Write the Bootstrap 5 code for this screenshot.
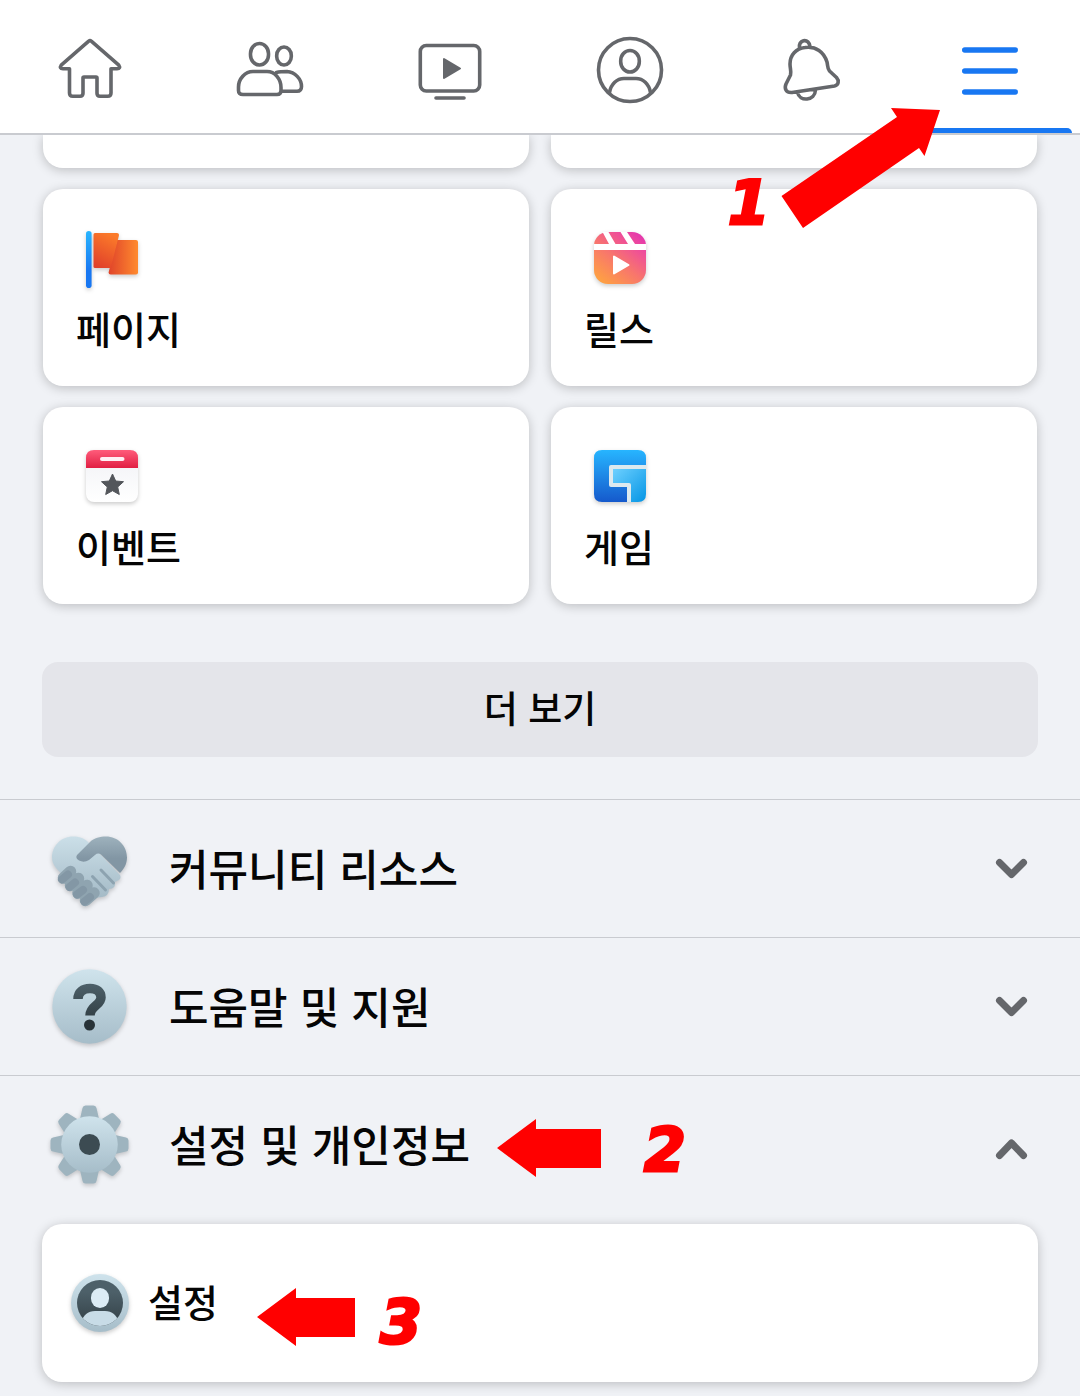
<!DOCTYPE html>
<html lang="ko">
<head>
<meta charset="utf-8">
<meta name="viewport" content="width=device-width, initial-scale=1">
<title>메뉴</title>
<link href="https://cdn.jsdelivr.net/npm/bootstrap@5.3.0/dist/css/bootstrap.min.css" rel="stylesheet">
<style>
body{background:#f0f2f6;color:#050505;font-family:"Noto Sans CJK KR",sans-serif;font-weight:500;overflow-x:hidden}
.top-tabs{border-bottom:2px solid #c9cbd0}
.tab-link{padding:30px 0 23px;position:relative;color:#65676b}
.tab-link svg{width:80px;height:80px;display:block}
.tab-link.active{color:#1877f2}
.tab-link.active::after{content:"";position:absolute;left:8px;right:8px;bottom:0;height:5px;background:#1877f2;border-radius:5px 5px 0 0}
.line-art{fill:none;stroke:currentColor;stroke-width:3.6;stroke-linecap:round;stroke-linejoin:round}
.page-pad{padding-left:42px;padding-right:42px}
.tile-grid{display:grid;grid-template-columns:1fr 1fr;column-gap:22px;row-gap:21px;padding:0 1px}
.tile{background:#fff;border-radius:20px;box-shadow:0 2px 11px rgba(0,0,0,.22);color:#050505;text-decoration:none;font-size:38px;line-height:48px}
.tile-link{padding:33px 33px 34px;display:flex;flex-direction:column;gap:10px}
.tile-link svg,.tile-row svg{width:72px;height:72px;overflow:visible}
.tile-stub{height:33px;border-radius:0 0 20px 20px}
.soft{filter:drop-shadow(0 2px 2px rgba(0,0,0,.2))}
.more-btn{background:#e4e5ea;border:0;border-radius:16px;font-size:37px;line-height:48px;font-weight:500;color:#050505;padding:21px 0 26px;margin-top:58px;margin-bottom:42px}
.section-btn{border:0;border-top:1px solid #c9cbd0;background:none;height:138px;font-size:43px;line-height:60px;font-weight:500;color:#050505;gap:31px;text-align:left}
.section-btn span{padding-bottom:4px}
.section-btn .sec-icon{width:96px;height:96px;flex:none}
.section-btn .chev{width:54px;height:54px;margin-left:auto;fill:none;stroke:#65676b;stroke-width:7;stroke-linecap:round;stroke-linejoin:round}
.tile-row{height:158px;padding:0 22px;gap:12px;margin-top:11px;margin-bottom:14px;display:flex;align-items:center}
.tile-row span{padding-bottom:4px}
.guide{position:absolute;pointer-events:none;fill:red;z-index:5}
.guide-num{position:absolute;pointer-events:none;color:red;font:italic 900 60px/62px "DejaVu Sans",sans-serif;-webkit-text-stroke:3px red;z-index:5}
.guide-1{left:780px;top:106px;width:162px;height:124px}
.guide-num-1{left:728px;top:172px}
.guide-2{left:497px;top:43px;width:105px;height:60px}
.guide-num-2{left:644px;top:44px}
.guide-3{left:215px;top:63px;width:99px;height:60px}
.guide-num-3{left:338px;top:67px}
</style>
</head>
<body>
<header class="top-tabs bg-white position-relative">
<nav class="row g-0" aria-label="탭">
<a class="col tab-link d-flex justify-content-center" href="#" aria-label="홈"><svg class="line-art" viewBox="0 0 80 80"><path d="M38.7 11.2 11.2 35.2Q9 38.5 13 38.7H19.5V63q0 3.3 3.3 3.3H30q3 0 3-3V48q0-1 1-1H46q1 0 1 1V63.300q0 3 3 3H57.700q3.300 0 3.300-3.300V38.700H67q4-.2 1.800-3.500L41.300 11.200Q40 10 38.700 11.200Z"/></svg></a>
<a class="col tab-link d-flex justify-content-center" href="#" aria-label="친구"><svg class="line-art" viewBox="0 0 80 80"><rect x="20.500" y="13.500" width="18" height="21.500" rx="9" ry="10"/><rect x="46.700" y="17" width="14.600" height="18" rx="7.300" ry="8.500"/><path d="M23 41.500H37C45 41.500 51 49 51 57.500V60.500Q51 64.500 47 64.500H13Q8.500 64.500 8.500 60.500V57C8.500 49 15 41.500 23 41.500ZM46.500 42.500C50 41.500 52 41.500 57 41.500 65 42 71.500 49 71.500 56.500Q71.500 61.300 67 61.300H52"/></svg></a>
<a class="col tab-link d-flex justify-content-center" href="#" aria-label="Watch"><svg class="line-art" viewBox="0 0 80 80"><rect x="10.300" y="15.500" width="59.400" height="45.500" rx="6"/><path d="M26 68H54"/><path fill="currentColor" stroke-width="2" d="M34 29V48L50 38.500Z"/></svg></a>
<a class="col tab-link d-flex justify-content-center" href="#" aria-label="프로필"><svg class="line-art" viewBox="0 0 80 80"><circle cx="40" cy="40" r="31.500"/><rect x="30.700" y="20.500" width="18.600" height="21.500" rx="9.300" ry="10.300"/><path d="M19.500 62.500C21 54 27 48.500 34 48.500H46C53 48.500 59 54 60.500 62.500"/></svg></a>
<a class="col tab-link d-flex justify-content-center" href="#" aria-label="알림"><svg class="line-art" viewBox="0 0 80 80"><path d="M20.500 45C21.500 41 20 39 20 34 20 25 26 18.500 35 17.500 46 16 54 22 57 32 58 36 57 37.500 59.500 41L66.500 47.500C69.500 51 68.500 55 64.500 56L22 62.500C16 63 14 58.500 16 54ZM29.500 18C29 14 30.500 11.500 33.500 10.700 37 10 39.500 12.500 40 16.500M27.500 62.500C29.500 72 45 71 45.500 60"/></svg></a>
<a class="col tab-link active d-flex justify-content-center" href="#" aria-label="메뉴" aria-current="page"><svg class="line-art" viewBox="0 0 80 80"><path stroke-width="5.600" d="M14.800 20H65.200M14.800 41H65.200M14.800 62H65.200"/></svg></a>
</nav>
<svg class="guide guide-1" viewBox="0 0 162 124"><path d="M160 4 111 2 117 11 1.500 90 23 122 139 42 144.500 50Z"/></svg>
<span class="guide-num guide-num-1">1</span>
</header>

<main>
<section class="page-pad">
<div class="tile-grid">
<div class="tile tile-stub"></div><div class="tile tile-stub"></div>
<a class="tile tile-link" href="#"><svg viewBox="0 0 72 72"><defs><linearGradient id="pole" x2="0" y2="1"><stop stop-color="#29b6ff"/><stop offset=".7" stop-color="#1877f2"/></linearGradient><linearGradient id="fa" x1=".6" x2=".2" y2="1"><stop stop-color="#fb7a2a"/><stop offset="1" stop-color="#e0402a"/></linearGradient><linearGradient id="fb"><stop stop-color="#e0442a"/><stop offset="1" stop-color="#ff8a2e"/></linearGradient></defs><g class="soft"><rect x="10" y="9" width="5.600" height="57" rx="2.800" fill="url(#pole)"/><path fill="url(#fb)" d="M41 18H60Q62 18 62 20V50.500Q62 52.500 60 52.500H34.500Q32.300 52.500 32.700 50Z"/><path fill="url(#fa)" d="M19 11H41Q43.500 11 42.800 14L34.700 46H19Q17.500 46 17.500 44.500V12.500Q17.500 11 19 11Z"/></g></svg><span>페이지</span></a>
<a class="tile tile-link" href="#"><svg viewBox="0 0 72 72"><defs><linearGradient id="rl" x1=".1" y1="1" x2=".9" y2="0"><stop stop-color="#ffa53e"/><stop offset=".45" stop-color="#f8766c"/><stop offset=".8" stop-color="#ee4b9c"/><stop offset="1" stop-color="#e233b0"/></linearGradient></defs><g class="soft"><rect x="10" y="10" width="52" height="52" rx="14" fill="url(#rl)"/><path fill="#fff" d="M10 22H25L18.500 10H24.500L31.500 22H44L36.500 10H43L51 22H62V28H10Z"/><path fill="#fff" stroke="#fff" stroke-width="2" stroke-linejoin="round" d="M30 34.500V51.500L44.500 43Z"/></g></svg><span>릴스</span></a>
<a class="tile tile-link" href="#"><svg viewBox="0 0 72 72"><defs><linearGradient id="ev" x2="0" y2="1"><stop stop-color="#ff5c7b"/><stop offset="1" stop-color="#e11f43"/></linearGradient><linearGradient id="ew" x2="0" y2="1"><stop stop-color="#f0f1f5"/><stop offset="1" stop-color="#fff"/></linearGradient></defs><g class="soft"><rect x="10" y="10" width="52" height="52" rx="8" fill="url(#ew)"/><path fill="url(#ev)" d="M10 28V18Q10 10 18 10H54Q62 10 62 18V28Z"/><rect x="24" y="17" width="24.500" height="4" rx="2" fill="#fff0f4"/></g><path fill="#53565b" stroke="#53565b" stroke-linejoin="round" d="M36.500 34 39.700 41 47.500 41.700 41.700 47 43.300 54.500 36.500 50.700 29.700 54.500 31.300 47 25.500 41.700 33.300 41Z"/></svg><span>이벤트</span></a>
<a class="tile tile-link" href="#"><svg viewBox="0 0 72 72"><defs><linearGradient id="ga" x2="0" y2="1"><stop stop-color="#27b5ff"/><stop offset="1" stop-color="#1559cc"/></linearGradient><linearGradient id="gb" x2="1" y2="1"><stop stop-color="#6dd0ff"/><stop offset="1" stop-color="#0495e5"/></linearGradient></defs><g class="soft"><path fill="#dce9ef" d="M25 25H62V54L54 62H43V47H25Z"/><path fill="url(#ga)" d="M18 10H54Q62 10 62 18V25H27Q25 25 25 27V45Q25 47 27 47H43V62H18Q10 62 10 54V18Q10 10 18 10Z"/><path fill="url(#gb)" d="M29 29H62V54Q62 62 54 62H47V45Q47 43 45 43H29Z"/></g></svg><span>게임</span></a>
</div>
<button type="button" class="more-btn d-block w-100">더 보기</button>
</section>

<section>
<button type="button" class="section-btn page-pad w-100 d-flex align-items-center" aria-expanded="false">
<svg class="sec-icon soft" viewBox="0 0 96 96"><defs><linearGradient id="hl" x2="0" y2="1"><stop stop-color="#cbdfe8"/><stop offset="1" stop-color="#a4bac6"/></linearGradient><linearGradient id="hd" x2="0" y2="1"><stop stop-color="#9eb2bd"/><stop offset=".6" stop-color="#8296a4"/></linearGradient></defs>
<path fill="url(#hl)" d="M31 15.500C37 15.500 42 17 46 21L58 33 78 54Q80 58 75 60L73 61Q74 68 67 68 67 75 60 76L43 78 22 55C14 48 10 43 10 36.500 10 25 19 15.500 31 15.500Z"/>
<path fill="url(#hd)" d="M64 15.500C76 15.500 85 25 85 36.500 85 43 82 48 78 52L59 33.500Q56 31.500 53 34L47 39Q42 42 37 39.500 33 37 35 34L48 21C52 17 58 15.500 64 15.500Z"/>
<path d="M21.500 57 28.500 50.500M28.500 64.500 36.500 57.500M36 72 45 64.500M43.500 79.500 52 72" stroke="#8fa4b0" stroke-width="11.500" stroke-linecap="round"/>
<path d="M20 58.500 26 53.500M27.500 66 33 61.500M35 73.500 41 69M42.500 80.500 48 76" stroke="#8397a5" stroke-width="8" stroke-linecap="round"/>
<path d="M50.500 55.500 63.500 69M59 49 71.500 62" stroke="#8da3b0" stroke-width="3" stroke-linecap="round"/></svg>
<span>커뮤니티 리소스</span><svg class="chev" viewBox="0 0 54 54"><path d="M15.500 20.500 27.500 32.500 39.500 20.500"/></svg></button>

<button type="button" class="section-btn page-pad w-100 d-flex align-items-center" aria-expanded="false">
<svg class="sec-icon" viewBox="0 0 96 96"><defs><linearGradient id="qc" x2="0" y2="1"><stop stop-color="#cfe3ec"/><stop offset="1" stop-color="#a6bdc9"/></linearGradient><linearGradient id="qd" gradientUnits="userSpaceOnUse" x1="0" y1="25" x2="0" y2="72"><stop stop-color="#4d6069"/><stop offset="1" stop-color="#283338"/></linearGradient></defs><circle class="soft" cx="47.500" cy="47.500" r="37.200" fill="url(#qc)"/><path d="M36 40C36 33 41 29.500 48 29.500 55 29.500 59 33 59 38.500 59 46.500 48 46.500 48 56.500" fill="none" stroke="url(#qd)" stroke-width="9.500"/><circle cx="47.500" cy="66" r="5.500" fill="#283338"/></svg>
<span>도움말 및 지원</span><svg class="chev" viewBox="0 0 54 54"><path d="M15.500 20.500 27.500 32.500 39.500 20.500"/></svg></button>

<div class="position-relative">
<button type="button" class="section-btn page-pad w-100 d-flex align-items-center" aria-expanded="true" aria-controls="privacy">
<svg class="sec-icon" viewBox="0 0 96 96"><defs><path id="tooth" d="M37.500 24 40.500 11Q41 8.500 43.500 8.500H51.500Q54 8.500 54.500 11L57.500 24Z"/></defs><g class="soft"><g fill="#9eb4bf"><use href="#tooth"/><use href="#tooth" transform="rotate(45 47.500 47.500)"/><use href="#tooth" transform="rotate(90 47.500 47.500)"/><use href="#tooth" transform="rotate(135 47.500 47.500)"/><use href="#tooth" transform="rotate(180 47.500 47.500)"/><use href="#tooth" transform="rotate(225 47.500 47.500)"/><use href="#tooth" transform="rotate(270 47.500 47.500)"/><use href="#tooth" transform="rotate(315 47.500 47.500)"/></g><circle cx="47.500" cy="47.500" r="28.300" fill="url(#qc)"/></g><circle cx="47.500" cy="47.500" r="10.500" fill="#3c4b52"/></svg>
<span>설정 및 개인정보</span><svg class="chev" viewBox="0 0 54 54"><path d="M15.500 37.500 27.500 25 39.500 37.500"/></svg></button>
<svg class="guide guide-2" viewBox="0 0 105 60"><path d="M0 30 39 1V11H104V50H39V59Z"/></svg>
<span class="guide-num guide-num-2">2</span>
</div>
<div id="privacy" class="page-pad">
<div class="position-relative">
<a class="tile tile-row" href="#"><svg class="soft" viewBox="0 0 72 72"><defs><clipPath id="av"><circle cx="36" cy="36" r="23"/></clipPath></defs><circle cx="36" cy="36" r="29" fill="url(#qc)"/><circle cx="36" cy="36" r="23" fill="url(#qd)"/><g clip-path="url(#av)"><rect x="27" y="21" width="18" height="20" rx="9" ry="9.500" fill="#dcecf5"/><path fill="#c8dce7" d="M17 56C19 48 24 44 31 44H41C48 44 53 48 55 56L50 62H22Z"/></g></svg><span>설정</span></a>
<svg class="guide guide-3" viewBox="0 0 99 60"><path d="M0 30 39 1V11H98V50H39V59Z"/></svg>
<span class="guide-num guide-num-3">3</span>
</div>
</div>
</section>
</main>
<script src="https://cdn.jsdelivr.net/npm/bootstrap@5.3.0/dist/js/bootstrap.bundle.min.js"></script>
</body>
</html>
